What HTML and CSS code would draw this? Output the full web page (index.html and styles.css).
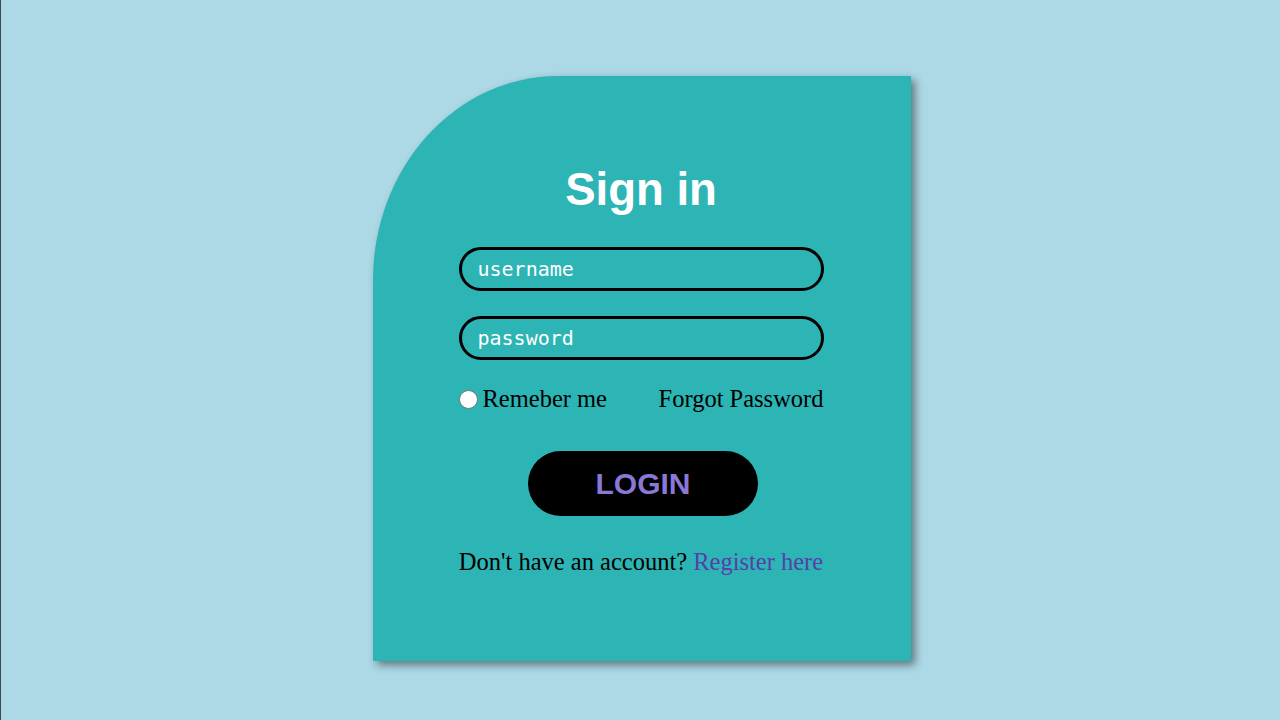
FILE: index.html
```
<!DOCTYPE html>
<html>
<head>
<meta charset="utf-8">
<link rel="stylesheet" href="styles.css">
</head>
<body>
<div class="card">
  <form class="form">
    <h1 class="title">Sign in</h1>
    <input class="field" type="text" placeholder="username">
    <input class="field" type="password" placeholder="password">
    <div class="row">
      <label class="remember"><input class="radio" type="radio">Remeber me</label>
      <span class="forgot">Forgot Password</span>
    </div>
    <button class="login" type="button">LOGIN</button>
    <p class="footer">Don't have an account? <span class="register">Register here</span></p>
  </form>
</div>
</body>
</html>
```
FILE: styles.css
```
html, body {
  margin: 0;
  padding: 0;
}
body {
  width: 1280px;
  height: 720px;
  background: #add8e6;
  box-sizing: border-box;
  border-left: 1px solid #3a4a50;
  padding-top: 76px;
  padding-left: 372px;
  overflow: hidden;
}
.card {
  width: 538px;
  height: 585px;
  box-sizing: border-box;
  background: #2db4b4;
  border-top-left-radius: 185px 204px;
  box-shadow: 4px 4px 9px rgba(0, 0, 0, 0.45);
  padding-top: 88px;
  display: flex;
  justify-content: center;
}
.form {
  width: 365px;
  margin-right: 2px;
  display: flex;
  flex-direction: column;
}
.title {
  margin: 0;
  font-family: "Liberation Sans", Arial, sans-serif;
  font-weight: bold;
  font-size: 45.5px;
  line-height: 52px;
  color: #fff;
  text-align: center;
  margin-bottom: 31px;
}
.field {
  height: 44px;
  box-sizing: border-box;
  border: 3px solid #000;
  border-radius: 22px;
  background: transparent;
  padding: 0 0 0 16px;
  margin: 0 0 25px 0;
  font-family: "DejaVu Sans Mono", monospace;
  font-size: 20px;
  color: #fff;
  outline: none;
}
.field::placeholder {
  color: #fff;
  opacity: 1;
}
.row {
  display: flex;
  justify-content: space-between;
  align-items: center;
  font-family: "Liberation Serif", "Times New Roman", serif;
  font-size: 24.5px;
  line-height: 28px;
  color: #000;
}
.remember {
  display: flex;
  align-items: center;
}
.radio {
  appearance: none;
  -webkit-appearance: none;
  width: 19px;
  height: 19px;
  margin: 0 5px 0 0;
  border: 1px solid #767676;
  border-radius: 50%;
  background: #fff;
  box-sizing: border-box;
}
.login {
  align-self: center;
  margin-top: 38px;
  margin-left: 4px;
  width: 230px;
  height: 65px;
  border: none;
  border-radius: 33px;
  background: #000;
  color: #8a78d6;
  font-family: "Liberation Sans", Arial, sans-serif;
  font-weight: bold;
  font-size: 30px;
  padding: 0;
}
.footer {
  margin: 32px 0 0 0;
  font-family: "Liberation Serif", "Times New Roman", serif;
  font-size: 24.5px;
  line-height: 28px;
  color: #000;
  text-align: center;
  white-space: nowrap;
}
.register {
  color: #553fa8;
}
```
